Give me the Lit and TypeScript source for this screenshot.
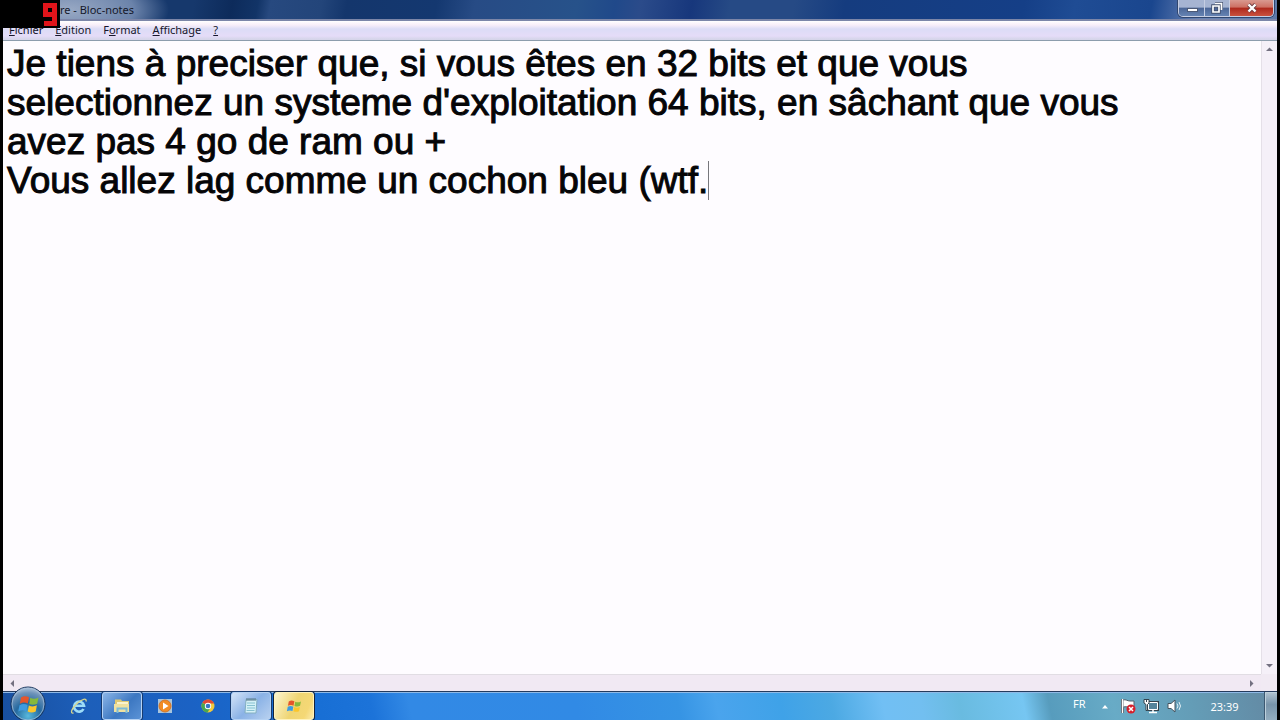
import { LitElement, html, css, svg } from "lit";
import { customElement, state } from "lit/decorators.js";

const NOTE = `Je tiens à preciser que, si vous êtes en 32 bits et que vous
selectionnez un systeme d'exploitation 64 bits, en sâchant que vous
avez pas 4 go de ram ou +
Vous allez lag comme un cochon bleu (wtf.`;

const flag = svg`
  <path d="M3 4.5C6 2.6 8.500 3 11 4.300L9.800 10.500C7.300 9.300 5 9.200 1.800 10.800Z" fill="#e5552b"/>
  <path d="M12.300 4.800C15 6.200 17.500 6 20.500 4.500L19.200 10.700C16.500 12 14 12 11.200 10.900Z" fill="#86b93c"/>
  <path d="M1.500 12.200C4.500 10.600 7 10.800 9.500 12L8.300 18.200C5.800 17 3.300 17 .3 18.500Z" fill="#3f9be0"/>
  <path d="M10.900 12.500C13.600 13.700 16 13.700 18.900 12.300L17.700 18.400C15 19.800 12.300 19.700 9.700 18.500Z" fill="#fbc62c"/>`;

@customElement("note-window")
export class NoteWindow extends LitElement {
  @state() private text = NOTE;

  static styles = css`
    :host { display: flex; flex-direction: column; min-height: 0; background: #f1eaf3; }
    button { font: inherit; color: inherit; border: 0; margin: 0; padding: 0; background: none; }
    .title {
      display: flex; justify-content: space-between; height: 21px; box-sizing: border-box;
      border-bottom: 2px solid #7c86a8; flex: none;
      background:
        radial-gradient(ellipse 100px 40px at 66px 10px, #b9c5dacc 0, #8fa3c5b3 65%, #0000 100%),
        linear-gradient(100deg, #16386c 0, #16386c 15%, #0d2b5b 18%, #123467 20%, #27497f 21%, #23457a 25%, #14366c 27%, #143870 34%, #274b85 37%, #27528a 45%, #20498a 48%, #2b4b8a 50%, #17377c 54%, #264a85 57%, #264a85 62%, #153c7f 66%, #153f87 80%, #1f4c94 84%, #1a468e 90%, #6b84b5 94%, #5d79a9 100%);
    }
    .name { margin: 0; padding-left: 19px; font-size: 11px; line-height: 20px; font-weight: 400; color: #15192b; }
    .controls {
      display: flex; height: 17px; margin-right: 3px; box-sizing: border-box;
      border: 1px solid #c5cde2; border-top: 0; border-radius: 0 0 5px 5px; overflow: hidden;
      box-shadow: 0 0 0 1px #30466f;
    }
    .control { display: grid; place-items: center; width: 25px; background: linear-gradient(#a6b4d2 0 45%, #4c6697 50%, #6583b3); }
    .control + .control { border-left: 1px solid #c5cde2; }
    .close { width: 44px; background: linear-gradient(#d99990 0, #cd6f62 45%, #ae281c 50%, #c9513e); }
    .menu {
      display: flex; gap: 12px; height: 20px; box-sizing: border-box; padding-left: 6px; flex: none;
      background: linear-gradient(#ffffff 0, #f8eef9 4px, #dcdcf6 8px, #e5dcf8 15px, #d6d5ea 18px);
      border-bottom: 1px solid #8d9dad; font-size: 11px; line-height: 18px; color: #16162b;
    }
    .menu button { align-self: flex-start; line-height: 17px; }
    .body { display: grid; grid-template-columns: 1fr 16px; grid-template-rows: 1fr 17px; flex: 1; min-height: 0; }
    .page { position: relative; display: flex; background: #fefcff; }
    .text {
      flex: 1; border: 0; outline: 0; margin: 0; padding: 3px 4px; resize: none; overflow: hidden;
      background: none; color: #050507; font: 37px/39px "Liberation Sans", Arial, sans-serif;
      -webkit-text-stroke: 1px #050507;
    }
    .caret { position: absolute; left: 705px; top: 120px; width: 1px; height: 39px; background: #77777c; }
    .bar { display: flex; justify-content: space-between; align-items: center; background: #f1e9f3; }
    .bar.v { flex-direction: column; padding: 5px 0; border-left: 1px solid #e5e0e8; background: #f5f0f8; }
    .bar.h { padding: 0 6px; border-top: 1px solid #e1dde3; }
    .arrow { display: grid; place-items: center; width: 7px; height: 7px; }
    svg { display: block; }
  `;

  private arrow(label: string, d: string) {
    return html`<button class="arrow" aria-label=${label}><svg width="7" height="7"><path d=${d} fill="#737080"/></svg></button>`;
  }

  render() {
    return html`
      <header class="title">
        <h1 class="name">Sans titre - Bloc-notes</h1>
        <div class="controls">
          <button class="control" aria-label="Réduire"><svg width="12" height="12"><rect x="1.500" y="6.500" width="10" height="3" fill="#fff" stroke="#4c5976"/></svg></button>
          <button class="control" aria-label="Restaurer"><svg width="12" height="12"><path d="M4 1.500h6.500V8M2 4h6v6H2Z" fill="none" stroke="#43506f" stroke-width="3.500"/><path d="M4 1.500h6.500V8M2 4h6v6H2Z" fill="none" stroke="#fff" stroke-width="1.700"/></svg></button>
          <button class="control close" aria-label="Fermer"><svg width="12" height="12"><path d="M2.500 2.500 9.500 9.500M9.500 2.500 2.500 9.500" stroke="#6d3b40" stroke-width="4"/><path d="M2.500 2.500 9.500 9.500M9.500 2.500 2.500 9.500" stroke="#fff" stroke-width="2.400"/></svg></button>
        </div>
      </header>
      <nav class="menu">
        <button><u>F</u>ichier</button>
        <button><u>E</u>dition</button>
        <button>F<u>o</u>rmat</button>
        <button><u>A</u>ffichage</button>
        <button><u>?</u></button>
      </nav>
      <div class="body">
        <div class="page">
          <textarea class="text" aria-label="Texte" spellcheck="false" .value=${this.text}
            @input=${(e: Event) => (this.text = (e.target as HTMLTextAreaElement).value)}></textarea>
          <span class="caret"></span>
        </div>
        <div class="bar v">${this.arrow("Haut", "M0 5 3.500 1.500 7 5Z")}${this.arrow("Bas", "M0 2 3.500 5.500 7 2Z")}</div>
        <div class="bar h">${this.arrow("Gauche", "M5 0 1.500 3.500 5 7Z")}${this.arrow("Droite", "M2 0 5.500 3.500 2 7Z")}</div>
        <div></div>
      </div>`;
  }
}

@customElement("task-bar")
export class TaskBar extends LitElement {
  static styles = css`
    :host {
      display: flex; height: 29px; box-sizing: border-box; border-top: 1px solid #243b5e;
      box-shadow: inset 0 1px #8fb9e6; color: #fff;
      background: linear-gradient(78deg, #184f9f 0, #1d5fba 7%, #1b62c4 15%, #176ed4 24%, #1c73d9 29%, #3289e5 32%, #318ae5 45%, #3694e4 53%, #4aa4ed 56%, #3fa2e8 61%, #4ca9e3 65%, #71bff4 69%, #72bff0 72%, #69bbe0 75%, #76c6f2 80%, #579cbd 82%, #68abc6 87%, #649db7 93%, #6388a2 100%);
    }
    button { display: grid; place-items: center; border: 0; margin: 0; padding: 0; background: none; color: inherit; font: inherit; }
    .start { position: relative; width: 56px; }
    .orb { position: absolute; left: 7px; top: -6px; }
    .apps { display: flex; flex: 1; gap: 3px; }
    .app { width: 40px; box-sizing: border-box; border-radius: 3px; }
    .open { border: 1px solid #b5d2f4; box-shadow: 0 0 0 1px #173b70; background: linear-gradient(135deg, #8bb5e7, #3d78c2 55%, #5b93d6); }
    .light { background: linear-gradient(135deg, #d3e3f7, #8ab2e6 50%, #b8d1f0); }
    .alert { border-color: #fff3bd; box-shadow: 0 0 0 1px #14233c; background: linear-gradient(115deg, #fdf5cf, #efd573 50%, #f5d875 80%, #fbeaac); }
    .tray { display: flex; align-items: center; font-size: 11px; }
    .lang { width: 20px; padding-bottom: 5px; }
    .icon { width: 23px; height: 27px; }
    .clock { width: 79px; }
    .peek { align-self: stretch; width: 13px; border-left: 1px solid #3c5871; box-shadow: inset 1px 1px #bdd0dc; background: linear-gradient(#b2c4d2, #7894aa 45%, #93adbf); }
    svg { display: block; }
  `;

  render() {
    return html`
      <button class="start" aria-label="Démarrer">
        <svg class="orb" width="36" height="36" viewBox="0 0 36 36">
          <defs><radialGradient id="g" cx=".5" cy=".85" r=".85"><stop offset="0" stop-color="#58b9dd"/><stop offset=".45" stop-color="#25699f"/><stop offset=".8" stop-color="#6e93b9"/><stop offset="1" stop-color="#b5c8dd"/></radialGradient></defs>
          <circle cx="18" cy="18" r="17" fill="url(#g)" stroke="#17345c"/>
          <circle cx="18" cy="18" r="16" fill="none" stroke="#a9c2dd" stroke-opacity=".7"/>
          <g transform="translate(8 7)">${flag}</g>
        </svg>
      </button>
      <div class="apps">
        <button class="app" aria-label="Internet Explorer"><svg width="18" height="18" viewBox="0 0 18 18">
          <path d="M13.500 12A5 5 0 1 1 14 8.800H5" fill="none" stroke="#9edcf8" stroke-width="2.600"/>
          <path d="M3.500 16C-.5 17 2 11 7 6.500S17 .5 16 4.500" fill="none" stroke="#d8d68c" stroke-width="1.300"/></svg></button>
        <button class="app open" aria-label="Explorateur"><svg width="18" height="16" viewBox="0 0 18 16">
          <path d="M2 3V1.500h6L9 3h7v10H2Z" fill="#dec974"/><path d="M4 4h11v5H4Z" fill="#f8f3cf"/><path d="M1 6h15v8H1Z" fill="#efe1a0"/><path d="M4.500 15v-4.500h9V15" fill="none" stroke="#7cbcd7" stroke-width="2"/></svg></button>
        <button class="app" aria-label="Lecteur Windows Media"><svg width="16" height="16" viewBox="0 0 16 16">
          <rect x="1" y="1" width="14" height="14" fill="#a8c4dc"/><circle cx="8" cy="8" r="6" fill="#f28c24" stroke="#d2752a"/><path d="M6 4.500v7L11.500 8Z" fill="#fff"/></svg></button>
        <button class="app" aria-label="Chrome"><svg width="16" height="16" viewBox="0 0 16 16">
          <circle cx="8" cy="8" r="6.500" fill="#f0c93c"/><path d="M8 8 2.400 4.700A6.500 6.500 0 0 1 14 5.500H8Z" fill="#df4937"/><path d="M8 8 2.400 4.700A6.500 6.500 0 0 0 7.500 14.500L10.500 9.500Z" fill="#4aa650"/><circle cx="8" cy="8" r="3.200" fill="#fff"/><circle cx="8" cy="8" r="2.300" fill="#3977c4"/></svg></button>
        <button class="app open light" aria-label="Bloc-notes"><svg width="16" height="18" viewBox="0 0 16 18">
          <path d="M3 2.500h11L13 16H2Z" fill="#d5f1f7" stroke="#84afc0"/><path d="M4 6h8M4 8.500h8M4 11h8M3.500 13.500h8" stroke="#87c1d1"/><path d="M4 1v3M6 1v3M8 1v3M10 1v3M12 1v3" stroke="#557587"/></svg></button>
        <button class="app open alert" aria-label="Windows"><svg width="16" height="16" viewBox="-1 0 23 22">${flag}</svg></button>
      </div>
      <div class="tray">
        <span class="lang">FR</span>
        <button class="icon" aria-label="Icônes cachées"><svg width="8" height="5"><path d="M1 4.500 4 1 7 4.500Z" fill="#fff"/></svg></button>
        <button class="icon" aria-label="Centre de maintenance"><svg width="16" height="16" viewBox="0 0 16 16">
          <path d="M2.500 1v14" stroke="#404a53" stroke-width="3"/><path d="M3 2c3-1 4 1 7 1h4v6c-4 1-6-1-11 0Z" fill="#fff" stroke="#52616c"/><path d="M2.500 1v14" stroke="#fff" stroke-width="1.500"/><circle cx="11" cy="11" r="4.500" fill="#d5202c"/><path d="m9 9 4 4m0-4-4 4" stroke="#fff" stroke-width="1.500"/></svg></button>
        <button class="icon" aria-label="Réseau"><svg width="16" height="16" viewBox="0 0 16 16">
          <path d="M5.500 4.500h9v7h-9Z" fill="#557b90" stroke="#34434d" stroke-width="3"/><path d="M5.500 4.500h9v7h-9Z" fill="#55849b" stroke="#fff"/><path d="M6 14.500h8M10 12v2" stroke="#fff" stroke-width="1.500"/><path d="M1 1.500h5V5L4.500 6.500v6H3v-6L1 5Z" fill="#fff" stroke="#34434d"/><path d="M3.500 1v3" stroke="#34434d"/></svg></button>
        <button class="icon" aria-label="Volume"><svg width="16" height="16" viewBox="0 0 16 16">
          <path d="M2 5.500h3L9 2v12L5 10.500H2Z" fill="#fff" stroke="#46545f"/><path d="M11 5.500q2 2.500 0 5M13 4q3 4 0 8" fill="none" stroke="#e3f0f6"/></svg></button>
        <button class="clock">23:39</button>
        <button class="peek" aria-label="Afficher le Bureau"></button>
      </div>`;
  }
}

@customElement("app-root")
export class AppRoot extends LitElement {
  static styles = css`
    :host {
      display: flex; flex-direction: column; position: relative; height: 100vh; box-sizing: border-box;
      padding: 0 3px; background: #000; overflow: hidden; font-family: "Noto Sans", "Open Sans", sans-serif;
    }
    note-window { flex: 1; }
    .counter { position: absolute; left: 0; top: 0; width: 60px; height: 28px; background: #000; }
    .digit { position: absolute; right: 3px; top: 3px; display: block; }
  `;

  render() {
    return html`
      <note-window></note-window>
      <task-bar></task-bar>
      <div class="counter" role="img" aria-label="9">
        <svg class="digit" width="14" height="23" viewBox="0 0 14 23"><path fill-rule="evenodd" fill="#e0141a" d="M0 0H14V23H1V18H9V14H0ZM5 5V9H9V5Z"/></svg>
      </div>`;
  }
}
